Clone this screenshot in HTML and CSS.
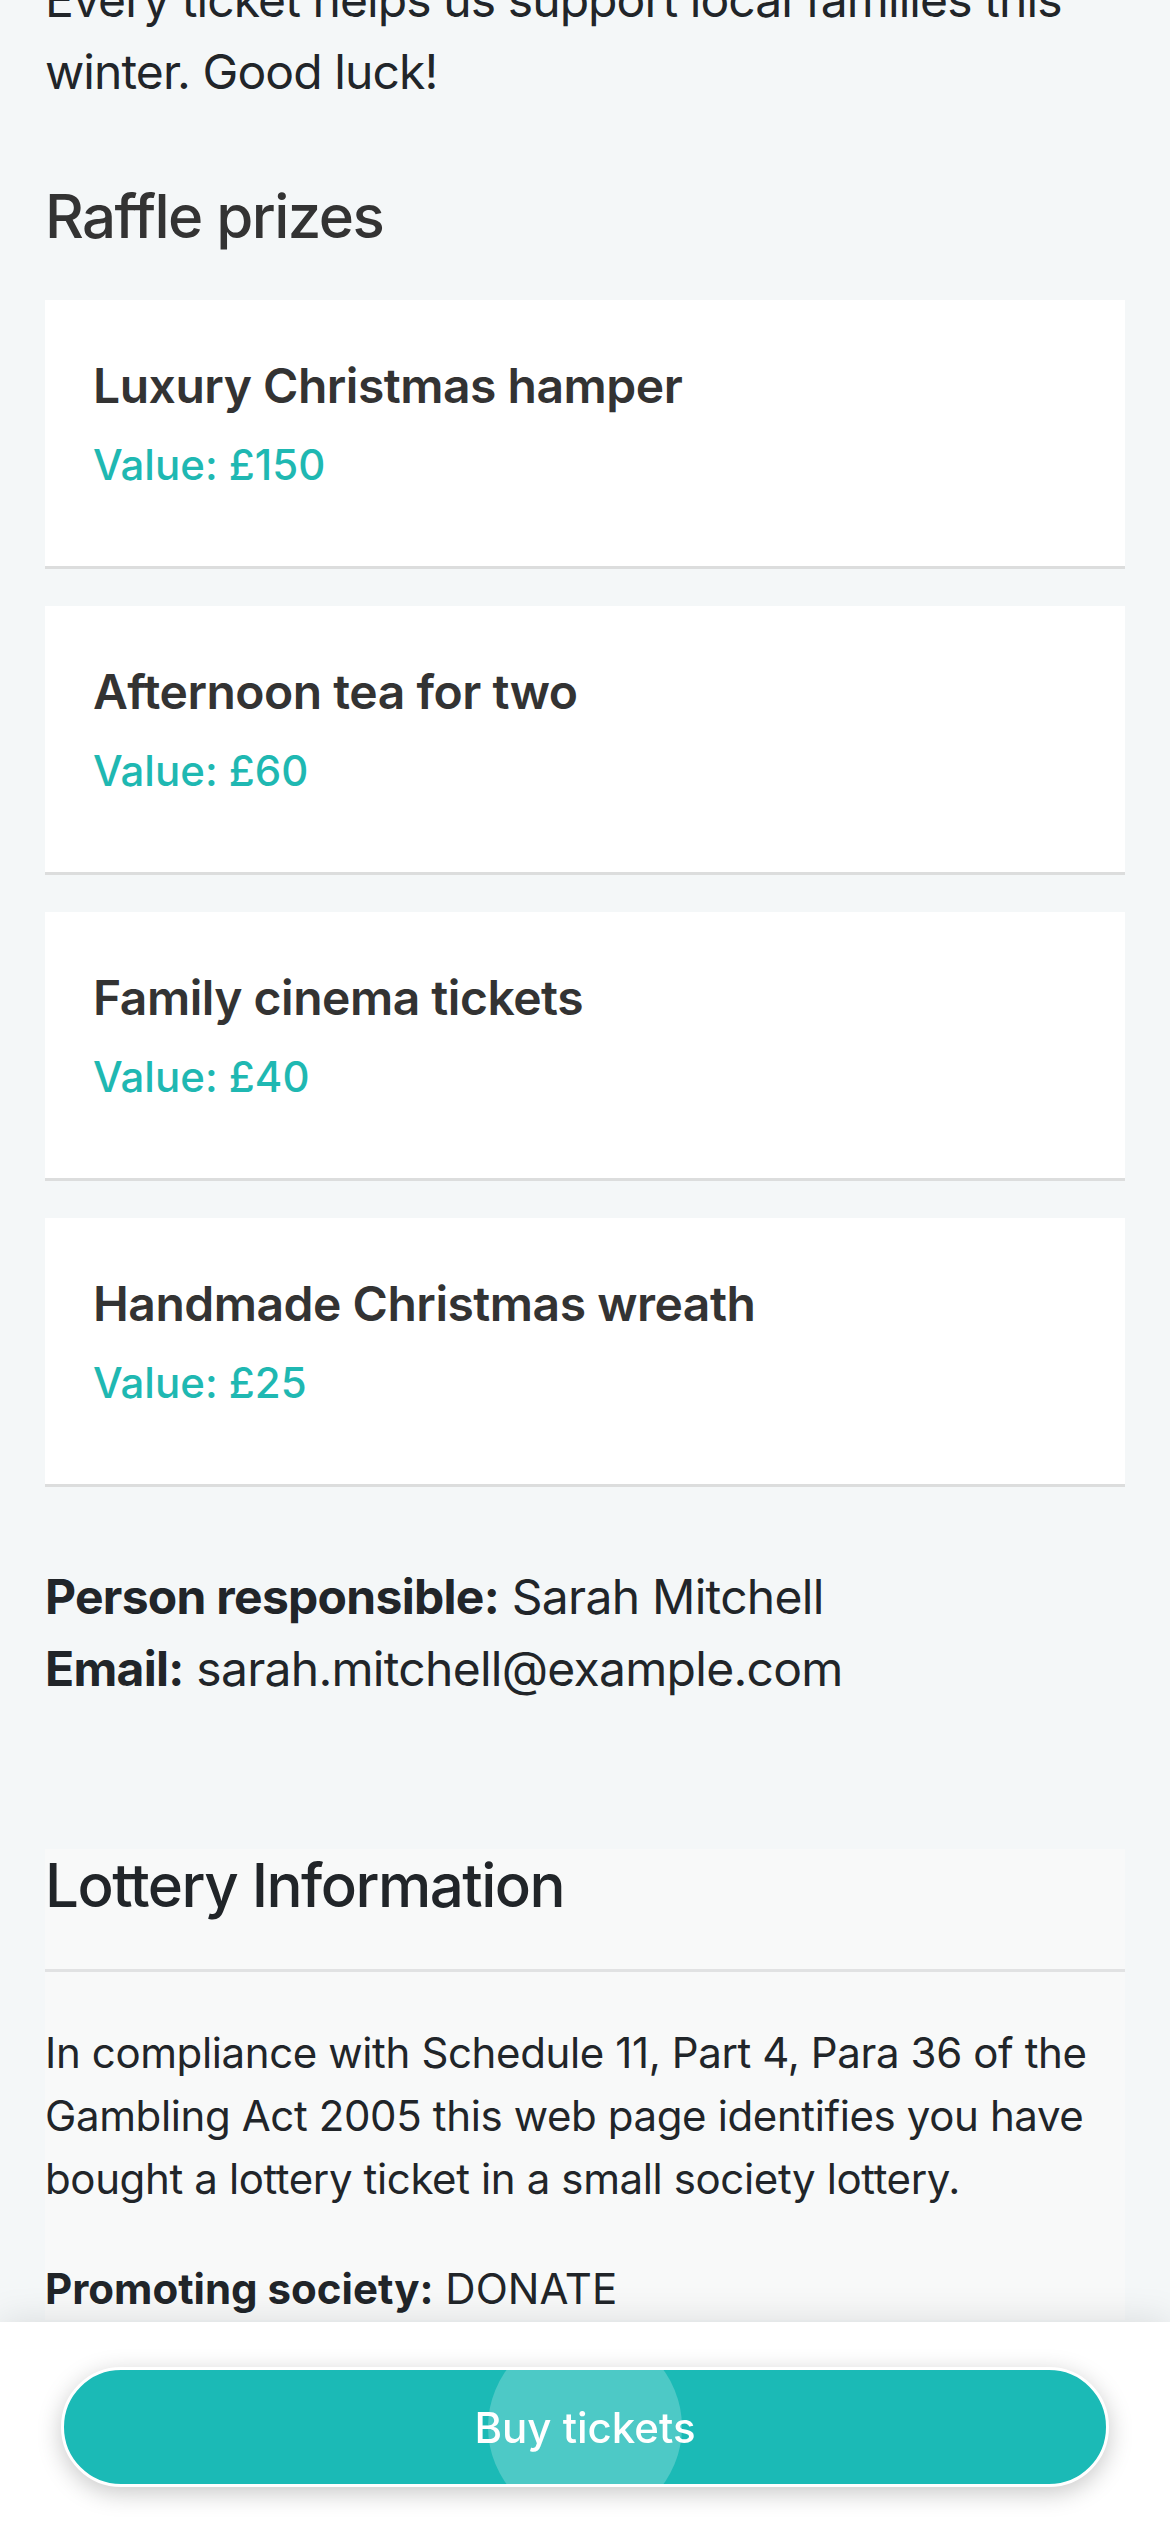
FILE: index.html
```html
<!DOCTYPE html>
<html lang="en">
<head>
<meta charset="utf-8">
<title>Christmas Raffle</title>
<link rel="stylesheet" href="styles.css">
</head>
<body>
<main class="page">
  <p class="intro">Every ticket helps us support local families this winter. Good luck!</p>

  <h2 class="section-title">Raffle prizes</h2>

  <ul class="prizes">
    <li class="prize">
      <h3 class="prize-name">Luxury Christmas hamper</h3>
      <p class="prize-value">Value: £150</p>
    </li>
    <li class="prize">
      <h3 class="prize-name">Afternoon tea for two</h3>
      <p class="prize-value">Value: £60</p>
    </li>
    <li class="prize">
      <h3 class="prize-name">Family cinema tickets</h3>
      <p class="prize-value">Value: £40</p>
    </li>
    <li class="prize">
      <h3 class="prize-name">Handmade Christmas wreath</h3>
      <p class="prize-value">Value: £25</p>
    </li>
  </ul>

  <div class="contact">
    <p class="contact-line"><strong>Person responsible:</strong> Sarah Mitchell</p>
    <p class="contact-line"><strong>Email:</strong> sarah.mitchell@example.com</p>
  </div>

  <section class="lottery">
    <h2 class="lottery-title">Lottery Information</h2>
    <p class="lottery-text lottery-legal">In compliance with Schedule 11, Part 4, Para 36 of the Gambling Act 2005 this web page identifies you have bought a lottery ticket in a small society lottery.</p>
    <p class="lottery-text"><strong>Promoting society:</strong> DONATE</p>
  </section>
</main>

<footer class="action-bar">
  <button class="buy-button" type="button"><span class="ripple"></span><span class="buy-label">Buy tickets</span></button>
</footer>
</body>
</html>
```

FILE: styles.css
```css
* {
  box-sizing: border-box;
}

html, body {
  margin: 0;
  padding: 0;
}

body {
  background: #f4f7f8;
  font-family: Inter, "Noto Sans", "Liberation Sans", sans-serif;
  color: #212529;
  -webkit-font-smoothing: antialiased;
}

.page {
  padding: 0 45px 300px;
}

.intro {
  margin: -36px 0 0;
  font-size: 48px;
  line-height: 72px;
  letter-spacing: -0.019em;
  color: #212529;
}

.section-title {
  margin: 72px 0 48px;
  font-size: 60px;
  line-height: 72px;
  font-weight: 500;
  letter-spacing: -0.026em;
  color: #333333;
}

.prizes {
  list-style: none;
  margin: 0;
  padding: 0;
  display: flex;
  flex-direction: column;
  gap: 37px;
}

.prize {
  background: #ffffff;
  border-bottom: 3px solid #dcdddd;
  padding: 50px 48px 70px;
  height: 269px;
}

.prize-name {
  margin: 0;
  font-size: 48px;
  line-height: 72px;
  font-weight: 600;
  letter-spacing: -0.01em;
  color: #333333;
}

.prize-value {
  margin: 11px 0 0;
  font-size: 42px;
  line-height: 63px;
  font-weight: 500;
  color: #1fb8b2;
}

.contact {
  margin-top: 74px;
}

.contact-line {
  margin: 0;
  font-size: 48px;
  line-height: 72px;
  letter-spacing: -0.015em;
  color: #212529;
}

.contact-line strong {
  font-weight: 700;
}

.lottery {
  margin-top: 144px;
  background: #f8f9f9;
}

.lottery-title {
  margin: 0;
  padding-bottom: 48px;
  border-bottom: 3px solid #e1e2e3;
  font-size: 60px;
  line-height: 72px;
  font-weight: 500;
  letter-spacing: -0.025em;
  color: #212529;
}

.lottery-text {
  margin: 47px 0 0;
  font-size: 42px;
  line-height: 63px;
  color: #212529;
}

.lottery-legal {
  margin-top: 49px;
  letter-spacing: -0.009em;
}

.lottery-text strong {
  font-weight: 700;
}

.action-bar {
  position: fixed;
  left: 0;
  right: 0;
  bottom: 0;
  height: 210px;
  background: #ffffff;
  box-shadow: 0 0 36px rgba(0, 0, 0, 0.12);
  padding: 45px 61px;
}

.buy-button {
  position: relative;
  overflow: hidden;
  display: flex;
  align-items: center;
  justify-content: center;
  width: 100%;
  height: 120px;
  border: 3px solid #ffffff;
  border-radius: 60px;
  background: #1bbab6;
  box-shadow: 0 6px 24px rgba(0, 0, 0, 0.22);
  font-family: Inter, "Noto Sans", "Liberation Sans", sans-serif;
  font-size: 42px;
  font-weight: 500;
  color: #ffffff;
  padding: 0;
}

.ripple {
  position: absolute;
  left: 50%;
  top: 50%;
  width: 194px;
  height: 194px;
  margin: -97px 0 0 -97px;
  border-radius: 50%;
  background: rgba(255, 255, 255, 0.22);
}

.buy-label {
  position: relative;
}
```
